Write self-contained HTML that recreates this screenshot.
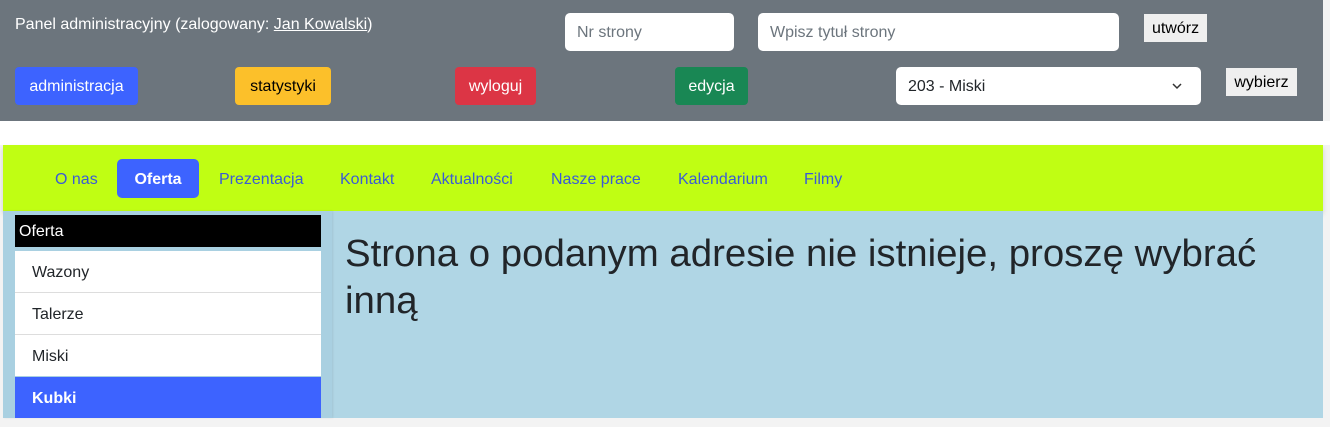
<!DOCTYPE html>
<html><head><meta charset="utf-8"><style>
*{margin:0;padding:0;box-sizing:border-box}
body{width:1330px;height:427px;background:#f3f3f3;position:relative;overflow:hidden;font-family:"Liberation Sans",sans-serif}
.a{position:absolute}
#top{left:0;top:0;width:1323px;height:121px;background:#6c757d}
#white{left:0;top:121px;width:1330px;height:24px;background:#fff}
.btn{position:absolute;height:38px;line-height:40px;border-radius:4px;color:#fff;font-size:16px;text-align:center}
.inp{position:absolute;background:#fff;border-radius:5px;height:38px;line-height:40px;color:#6c757d;font-size:16px;padding-left:12px}
.sb{position:absolute;background:#efefef;color:#000;font-size:16px;text-align:center;height:28px;line-height:30px}
#nav{left:3px;top:145px;width:1320px;height:66px;background:#c0fe13;box-shadow:0 3px 5px rgba(0,0,0,.15)}
.nl{position:absolute;top:159px;height:39px;line-height:41px;color:#3a5bd6;font-size:16px}
#main{left:3px;top:211px;width:1320px;height:207px;background:#b0d6e5}
#left{left:3px;top:211px;width:329px;height:207px;background:#a9d0e1;box-shadow:1px 0 2px rgba(0,0,0,.08)}
.it{position:absolute;left:15px;width:306px;height:41px;line-height:43px;background:#fff;padding-left:17px;font-size:16px;color:#212529}
.sep{position:absolute;left:15px;width:306px;height:1px;background:#ddd}
h1{position:absolute;left:345px;top:230px;width:960px;font-size:38.4px;line-height:47px;font-weight:normal;color:#212529}
</style></head><body>
<div class="a" id="top"></div>
<div class="a" style="left:15px;top:16px;color:#fff;font-size:16px">Panel administracyjny (zalogowany: <u>Jan Kowalski</u>)</div>
<div class="inp" style="left:565px;top:13px;width:169px">Nr strony</div>
<div class="inp" style="left:758px;top:13px;width:361px">Wpisz tytuł strony</div>
<div class="sb" style="left:1144px;top:14px;width:63px">utwórz</div>
<div class="btn" style="left:15px;top:67px;width:123px;background:#3d63ff">administracja</div>
<div class="btn" style="left:235px;top:67px;width:96px;background:#fcc02a;color:#000">statystyki</div>
<div class="btn" style="left:455px;top:67px;width:81px;background:#dc3545">wyloguj</div>
<div class="btn" style="left:675px;top:67px;width:73px;background:#198754">edycja</div>
<div class="inp" style="left:896px;top:67px;width:305px;color:#212529">203 - Miski<svg style="position:absolute;right:18px;top:15px" width="12" height="9" viewBox="0 0 12 9"><path d="M2 2l4 4 4-4" stroke="#333" stroke-width="1.5" fill="none"/></svg></div>
<div class="sb" style="left:1226px;top:68px;width:71px">wybierz</div>
<div class="a" id="white"></div>
<div class="a" id="nav"></div>
<div class="nl" style="left:55px">O nas</div>
<div class="nl" style="left:117px;width:82px;background:#3d63ff;color:#fff;font-weight:bold;border-radius:5px;text-align:center">Oferta</div>
<div class="nl" style="left:219px">Prezentacja</div>
<div class="nl" style="left:340px">Kontakt</div>
<div class="nl" style="left:431px">Aktualności</div>
<div class="nl" style="left:551px">Nasze prace</div>
<div class="nl" style="left:678px">Kalendarium</div>
<div class="nl" style="left:804px">Filmy</div>
<div class="a" id="main"></div>
<div class="a" id="left"></div>
<div class="a" style="left:15px;top:215px;width:306px;height:32px;background:#000;color:#fff;font-size:16px;line-height:33px;padding-left:4px">Oferta</div>
<div class="it" style="top:251px">Wazony</div>
<div class="sep" style="top:292px"></div>
<div class="it" style="top:293px">Talerze</div>
<div class="sep" style="top:334px"></div>
<div class="it" style="top:335px">Miski</div>
<div class="it" style="top:377px;background:#3d63ff;color:#fff;font-weight:bold">Kubki</div>
<h1>Strona o podanym adresie nie istnieje, proszę wybrać inną</h1>
</body></html>
